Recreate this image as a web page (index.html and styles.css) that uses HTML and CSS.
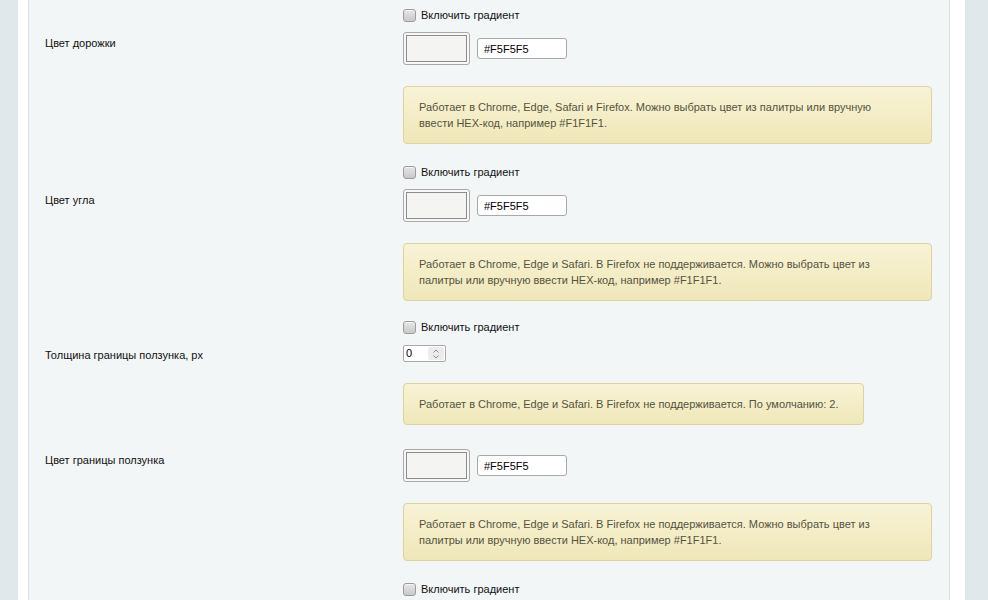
FILE: index.html
```html
<!DOCTYPE html>
<html lang="ru">
<head>
<meta charset="utf-8">
<title>Настройки скроллбара</title>
<link rel="stylesheet" href="styles.css">
</head>
<body>
<div class="page">
  <div class="panel">
    <div class="row row-check first">
      <div class="label"></div>
      <div class="value"><label class="check"><input type="checkbox" class="cb"> Включить градиент</label></div>
    </div>

    <div class="row row-color">
      <div class="label">Цвет дорожки</div>
      <div class="value">
        <span class="swatch"><span class="swatch-inner"></span></span>
        <input class="hex" type="text" value="#F5F5F5">
      </div>
    </div>
    <div class="row row-note">
      <div class="label"></div>
      <div class="value"><div class="note">Работает в Chrome, Edge, Safari и Firefox. Можно выбрать цвет из палитры или вручную ввести HEX-код, например #F1F1F1.</div></div>
    </div>

    <div class="row row-check">
      <div class="label"></div>
      <div class="value"><label class="check"><input type="checkbox" class="cb"> Включить градиент</label></div>
    </div>
    <div class="row row-color">
      <div class="label">Цвет угла</div>
      <div class="value">
        <span class="swatch"><span class="swatch-inner"></span></span>
        <input class="hex" type="text" value="#F5F5F5">
      </div>
    </div>
    <div class="row row-note">
      <div class="label"></div>
      <div class="value"><div class="note">Работает в Chrome, Edge и Safari. В Firefox не поддерживается. Можно выбрать цвет из палитры или вручную ввести HEX-код, например #F1F1F1.</div></div>
    </div>

    <div class="row row-check short">
      <div class="label"></div>
      <div class="value"><label class="check"><input type="checkbox" class="cb"> Включить градиент</label></div>
    </div>
    <div class="row row-num">
      <div class="label">Толщина границы ползунка, px</div>
      <div class="value">
        <span class="num"><span class="num-val">0</span><span class="spin"><svg width="8" height="12" viewBox="0 0 8 12"><path d="M1.5 4.5 L4 2 L6.5 4.5 M1.5 7.5 L4 10 L6.5 7.5" fill="none" stroke="#8a8a8a" stroke-width="1"/></svg></span></span>
      </div>
    </div>
    <div class="row row-note">
      <div class="label"></div>
      <div class="value"><div class="note note-short">Работает в Chrome, Edge и Safari. В Firefox не поддерживается. По умолчанию: 2.</div></div>
    </div>

    <div class="row row-color after-note">
      <div class="label">Цвет границы ползунка</div>
      <div class="value">
        <span class="swatch"><span class="swatch-inner"></span></span>
        <input class="hex" type="text" value="#F5F5F5">
      </div>
    </div>
    <div class="row row-note">
      <div class="label"></div>
      <div class="value"><div class="note">Работает в Chrome, Edge и Safari. В Firefox не поддерживается. Можно выбрать цвет из палитры или вручную ввести HEX-код, например #F1F1F1.</div></div>
    </div>

    <div class="row row-check">
      <div class="label"></div>
      <div class="value"><label class="check"><input type="checkbox" class="cb"> Включить градиент</label></div>
    </div>
  </div>
</div>
</body>
</html>
```

FILE: styles.css
```css
html, body {
  margin: 0;
  padding: 0;
  height: 100%;
  overflow: hidden;
}
body {
  background: #e1e8eb;
  font-family: "Liberation Sans", Arial, sans-serif;
  font-size: 11px;
  color: #000;
}
.page {
  margin-left: 18px;
  width: 947px;
  min-height: 100%;
  background: #ffffff;
  padding: 0 15px 0 10px;
  box-sizing: border-box;
  display: flex;
}
.panel {
  flex: 1;
  background: #f2f6f6;
  border-left: 1px solid #d9e4e2;
  border-right: 1px solid #d9e4e2;
  min-height: 600px;
  display: flex;
  flex-direction: column;
  padding-bottom: 40px;
}
.row {
  display: flex;
  align-items: flex-start;
}
.label {
  width: 358px;
  padding-left: 16px;
  flex: none;
  line-height: 13px;
  color: #111;
}
.value {
  flex: 1;
  display: flex;
  align-items: center;
  min-width: 0;
}

/* checkbox rows */
.row-check { margin-top: 22px; }
.row-check.first { margin-top: 9px; }
.row-check.short { margin-top: 20px; }
.check {
  display: flex;
  align-items: center;
  height: 13px;
  line-height: 13px;
  color: #111;
}
.cb {
  appearance: none;
  -webkit-appearance: none;
  width: 13px;
  height: 13px;
  margin: 0 5px 0 0;
  border: 1px solid #9c9c9c;
  border-radius: 3px;
  background: linear-gradient(#e6e6e6, #c9c9c9);
  box-shadow: inset 0 1px 0 #f4f4f4;
  box-sizing: border-box;
}

/* color rows */
.row-color { margin-top: 10px; }
.row-color.after-note { margin-top: 24px; }
.row-color .label { padding-top: 5px; }
.swatch {
  display: block;
  width: 67px;
  height: 33px;
  box-sizing: border-box;
  border: 1px solid #a9a9a9;
  border-radius: 3px;
  background: #f7f7f7;
  padding: 2px;
}
.swatch-inner {
  display: block;
  height: 100%;
  box-sizing: border-box;
  border: 1px solid #8c8c8c;
  background: #f4f4f2;
}
.hex {
  margin: 0 0 0 7px;
  width: 90px;
  height: 21px;
  box-sizing: border-box;
  border: 1px solid #a9a9a9;
  border-radius: 3px;
  background: #fff;
  padding: 0 6px;
  font-family: "Liberation Sans", Arial, sans-serif;
  font-size: 11px;
  color: #000;
  outline: none;
}

/* number row */
.row-num { margin-top: 11px; }
.row-num .label { padding-top: 4px; }
.num {
  display: flex;
  align-items: center;
  width: 43px;
  height: 17px;
  box-sizing: border-box;
  border: 1px solid #a9a9a9;
  border-radius: 2px;
  background: #fff;
}
.num-val {
  flex: 1;
  padding-left: 2px;
  font-size: 11px;
  line-height: 15px;
}
.spin {
  width: 16px;
  height: 13px;
  margin-right: 1px;
  background: #ececec;
  border-radius: 2px;
  display: flex;
  align-items: center;
  justify-content: center;
}

/* notes */
.row-note { margin-top: 21px; }
.note {
  display: inline-block;
  max-width: 529px;
  box-sizing: border-box;
  padding: 12px 40px 12px 15px;
  border: 1px solid #dcd3a0;
  border-radius: 4px;
  background: linear-gradient(#f8f3d6, #efe7b8);
  color: #55533f;
  font-size: 11px;
  line-height: 16px;
}
.note-short {
  padding-right: 24px;
}
```
